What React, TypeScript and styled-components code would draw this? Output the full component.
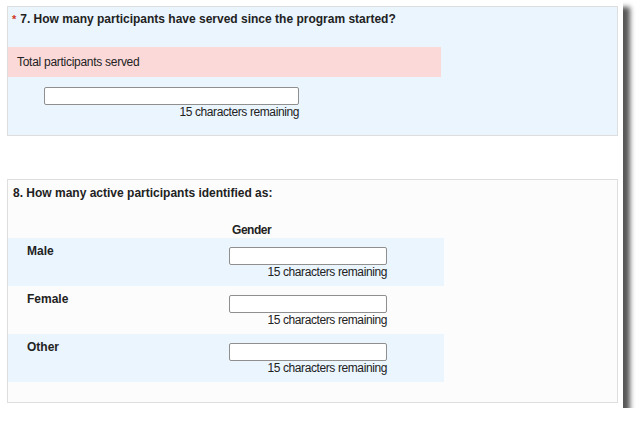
import React from "react";
import styled, { createGlobalStyle } from "styled-components";

const Global = createGlobalStyle`
  html, body { margin: 0; padding: 0; background: #ffffff; }
  body { font-family: "Liberation Sans", Arial, sans-serif; color: #222; }
`;

const Frame = styled.div`
  width: 623px;
  height: 408px;
  box-sizing: border-box;
  background: #ffffff;
  padding: 6px 0 0 7px;
  box-shadow: 7px 7px 5px rgba(0, 0, 0, 0.66);
  display: flex;
  flex-direction: column;
`;

const Panel = styled.section<{ $bg: string; $h: number; $mt?: number }>`
  width: 611px;
  height: ${(p) => p.$h}px;
  box-sizing: border-box;
  margin-top: ${(p) => p.$mt ?? 0}px;
  background: ${(p) => p.$bg};
  border: 1px solid #dedede;
  display: flex;
  flex-direction: column;
`;

const Title = styled.div<{ $pt: number; $pl: number }>`
  font-size: 12px;
  line-height: 14px;
  font-weight: bold;
  color: #222;
  padding: ${(p) => p.$pt}px 0 0 ${(p) => p.$pl}px;
  display: flex;
  align-items: baseline;
`;

const Req = styled.span`
  color: #d03a1e;
  font-size: 11px;
  margin-right: 4px;
`;

const ErrorBar = styled.div`
  margin-top: 21px;
  width: 433px;
  height: 30px;
  background: #fcd9d9;
  font-size: 12px;
  letter-spacing: -0.28px;
  line-height: 30px;
  padding-left: 9px;
  box-sizing: border-box;
  color: #222;
`;

const Field = styled.div<{ $ml: number; $mt: number }>`
  margin: ${(p) => p.$mt}px 0 0 ${(p) => p.$ml}px;
  display: flex;
  flex-direction: column;
  align-items: flex-end;
  width: max-content;
`;

const TextInput = styled.input<{ $w: number }>`
  width: ${(p) => p.$w}px;
  height: 18px;
  box-sizing: border-box;
  border: 1px solid #8f8f8f;
  border-radius: 2px;
  background: #fff;
  margin: 0;
  padding: 0 2px;
  font-family: inherit;
  font-size: 12px;
`;

const Counter = styled.div`
  font-size: 12px;
  letter-spacing: -0.4px;
  line-height: 14px;
  color: #222;
`;

const Grid = styled.div`
  width: 436px;
  display: grid;
  grid-template-columns: 221px 1fr;
`;

const ColHead = styled.div`
  grid-column: 2;
  font-size: 12px;
  letter-spacing: -0.45px;
  line-height: 14px;
  font-weight: bold;
  padding: 0 0 1px 3px;
  margin-top: 23px;
`;

const Row = styled.div<{ $alt: boolean }>`
  grid-column: 1 / span 2;
  display: grid;
  grid-template-columns: 221px 1fr;
  height: 48px;
  background: ${(p) => (p.$alt ? "#eaf5fe" : "transparent")};
`;

const RowLabel = styled.div`
  font-size: 12px;
  line-height: 14px;
  font-weight: bold;
  padding: 6px 0 0 19px;
`;

const RowCell = styled.div`
  padding-top: 9px;
`;

export default function App() {
  const rows = ["Male", "Female", "Other"];
  return (
    <>
      <Global />
      <Frame>
        <Panel $bg="#eaf5fe" $h={130}>
          <Title $pt={5} $pl={4}>
            <Req>*</Req>7. How many participants have served since the program started?
          </Title>
          <ErrorBar>Total participants served</ErrorBar>
          <Field $ml={36} $mt={10}>
            <TextInput $w={255} />
            <Counter>15 characters remaining</Counter>
          </Field>
        </Panel>
        <Panel $bg="#fcfcfc" $h={224} $mt={43}>
          <Title $pt={6} $pl={5}>8. How many active participants identified as:</Title>
          <Grid>
            <ColHead>Gender</ColHead>
            {rows.map((r, i) => (
              <Row key={r} $alt={i % 2 === 0}>
                <RowLabel>{r}</RowLabel>
                <RowCell>
                  <Field $ml={0} $mt={0}>
                    <TextInput $w={158} />
                    <Counter>15 characters remaining</Counter>
                  </Field>
                </RowCell>
              </Row>
            ))}
          </Grid>
        </Panel>
      </Frame>
    </>
  );
}
